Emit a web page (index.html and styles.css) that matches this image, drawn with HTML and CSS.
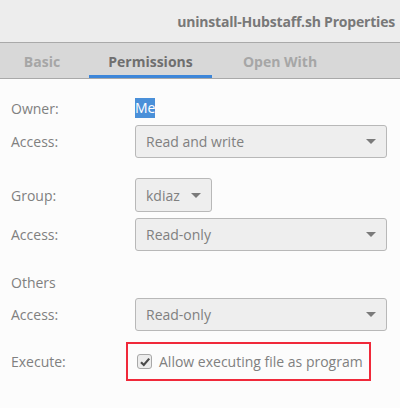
FILE: index.html
```html
<!DOCTYPE html>
<html lang="en">

<head>
    <meta charset="UTF-8">
    <title>uninstall-Hubstaff.sh Properties</title>
    <link rel="stylesheet" href="styles.css">
</head>

<body>
    <div class="titlebar">
        <span class="title">uninstall-Hubstaff.sh Properties</span>
    </div>
    <div class="tabs">
        <div class="tab basic">Basic</div>
        <div class="tab active">Permissions</div>
        <div class="tab open-with">Open With</div>
    </div>

    <div class="content">
        <div class="row owner-row">
            <div class="label">Owner:</div>
            <div class="value"><span class="selected">Me</span></div>
        </div>
        <div class="row">
            <div class="label">Access:</div>
            <div class="combo wide">Read and write<span class="arrow"></span></div>
        </div>

        <div class="row group-row">
            <div class="label">Group:</div>
            <div class="combo small">kdiaz<span class="arrow"></span></div>
        </div>
        <div class="row">
            <div class="label">Access:</div>
            <div class="combo wide">Read-only<span class="arrow"></span></div>
        </div>

        <div class="row others-row">
            <div class="label">Others</div>
        </div>
        <div class="row">
            <div class="label">Access:</div>
            <div class="combo wide">Read-only<span class="arrow"></span></div>
        </div>

        <div class="row execute-row">
            <div class="label">Execute:</div>
            <div class="highlight">
                <span class="checkbox">
                    <svg width="12" height="12" viewBox="0 0 12 12">
                        <path d="M2 6.2 L4.8 9 L10.2 2.6" fill="none" stroke="#4a4a4a" stroke-width="2.2" />
                    </svg>
                </span>
                <span class="check-text">Allow executing file as program</span>
            </div>
        </div>
    </div>
</body>

</html>
```

FILE: styles.css
```css
body {
    margin: 0;
    padding: 0;
    width: 400px;
    height: 408px;
    background-color: #fcfcfc;
    font-family: 'Open Sans', sans-serif;
    font-size: 14px;
    color: #808080;
    overflow: hidden;
}

.titlebar {
    height: 43px;
    box-sizing: border-box;
    background-color: #ededed;
    border-bottom: 1px solid #a9a9a9;
    display: flex;
    justify-content: flex-end;
    align-items: center;
    padding-right: 5px;
    padding-top: 1px;
}

.title {
    font-weight: bold;
    font-size: 14px;
    color: #787878;
    letter-spacing: -0.2px;
}

.tabs {
    height: 36px;
    box-sizing: border-box;
    background-color: #d8d8d8;
    border-bottom: 1px solid #a9a9a9;
    display: flex;
}

.tab {
    box-sizing: border-box;
    padding-top: 2px;
    display: flex;
    align-items: center;
    justify-content: center;
    font-weight: bold;
    color: #a6a6a6;
}

.tab.basic {
    width: 84px;
    margin-right: 5px;
}

.tab.active {
    width: 123px;
    color: #6f6f6f;
    box-shadow: inset 0 -3px 0 #3d86d9;
}

.tab.open-with {
    width: 136px;
}

.content {
    padding: 19px 13px 0 11px;
}

.row {
    display: flex;
    align-items: center;
    margin-bottom: 7px;
}

.label {
    width: 124px;
    flex-shrink: 0;
}

.owner-row {
    height: 20px;
}

.selected {
    background-color: #4a90d9;
    color: #ffffff;
    display: inline-block;
    line-height: 20px;
}

.combo {
    height: 33px;
    box-sizing: border-box;
    border: 1px solid #b8b8b8;
    border-radius: 3px;
    background-color: #eeeeee;
    display: flex;
    align-items: center;
    justify-content: space-between;
    padding: 0 10px 0 10px;
}

.combo.wide {
    flex: 1;
}

.combo.small {
    height: 34px;
    width: 77px;
}

.arrow {
    width: 0;
    height: 0;
    border-left: 5px solid transparent;
    border-right: 5px solid transparent;
    border-top: 5px solid #7a7a7a;
}

.group-row {
    margin-top: 20px;
    margin-bottom: 6px;
}

.others-row {
    margin-top: 22px;
    height: 18px;
}

.execute-row {
    margin-top: 11px;
}

.highlight {
    margin-left: -9px;
    height: 39px;
    width: 245px;
    box-sizing: border-box;
    border: 2px solid #f0293a;
    display: flex;
    align-items: center;
    padding-left: 9px;
    gap: 7px;
    white-space: nowrap;
}

.checkbox {
    width: 15px;
    height: 15px;
    flex-shrink: 0;
    box-sizing: border-box;
    border: 1px solid #a8a8a8;
    border-radius: 3px;
    background-color: #ececec;
    display: flex;
    align-items: center;
    justify-content: center;
}
```
